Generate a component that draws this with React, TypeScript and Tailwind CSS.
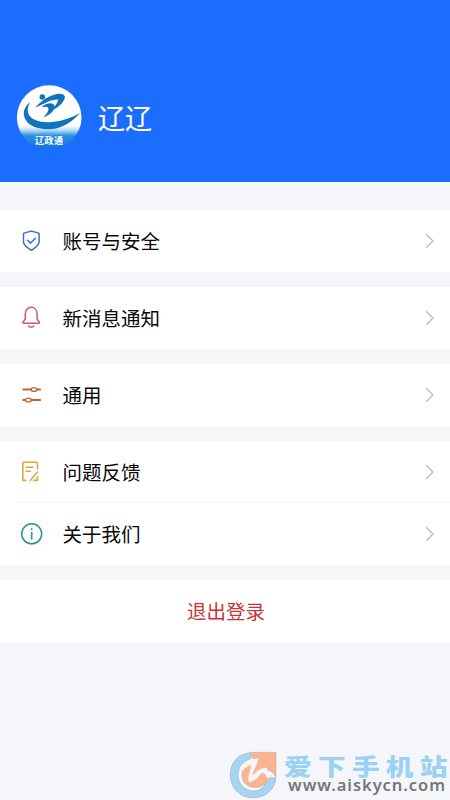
import type { ReactNode } from 'react';

function Avatar() {
  return (
    <svg className="h-[66px] w-[66px]" viewBox="0 0 66 66">
      <defs>
        <linearGradient id="avatarFill" x1="0" y1="0" x2="0" y2="1">
          <stop offset="0.63" stopColor="#fff" />
          <stop offset="0.71" stopColor="#a3d2f3" />
          <stop offset="0.78" stopColor="#2a8fe0" />
          <stop offset="1" stopColor="#1470e0" />
        </linearGradient>
      </defs>
      <circle cx="33.200" cy="32.500" r="32.300" fill="url(#avatarFill)" />
      <g fill="#1273bd">
        <circle cx="26.300" cy="12" r="2.800" />
        <path d="M19.500 22.500 C26 15 33 10.500 41 9 C47 8 50 10.500 48.500 14 C46 19.500 40 24 36 25 C39 21 42 17.500 42 14.500 C34 14.500 28 19 19.500 22.500Z" />
        <path d="M26 22 C30 17.500 38.500 17 38.500 21 C38.500 26 34 30 27.500 32.500 C31 28.500 33.500 25 32 22.500 C30 21 28 22 26 22Z" />
        <path d="M14 17 C8 22 6 29 9.500 34.500 C13 41.500 24 45 36 44 C47 43 56 37 64 28 C55 33 46 36 36 37 C25 38 15 35 12.500 29 C11 25 12 21 14 17Z" />
      </g>
      <text x="33.200" y="58.800" textAnchor="middle" fill="#fff" fontSize="9" fontWeight="700" letterSpacing="0.400" fontFamily="'Noto Sans CJK SC', sans-serif">辽政通</text>
    </svg>
  );
}

function ShieldIcon() {
  return (
    <svg className="size-[24px]" viewBox="0 0 24 24" fill="none" stroke="#3970bd" strokeWidth="1.500" strokeLinecap="round" strokeLinejoin="round">
      <path d="M3.500 4.800 Q3.500 4 4.400 3.900 C7 3.500 9 2.300 11.300 2.300 C13.600 2.300 15.800 3.500 18.200 3.900 Q19.100 4 19.100 4.800 V13 C19.100 16.500 15.500 18.500 11.300 21.300 C7 18.500 3.500 16.500 3.500 13Z" />
      <path d="m7.600 11.200 3 2.900 4.800-4.900" />
    </svg>
  );
}

function BellIcon() {
  return (
    <svg className="size-[24px]" viewBox="0 0 24 24" fill="none" stroke="#cf5960" strokeWidth="1.500" strokeLinecap="round" strokeLinejoin="round">
      <path d="M5.300 13 V8 C5.300 4 7.800 1.300 11.200 1.300 S17.100 4 17.100 8 V13 L19.300 16 Q19.800 17.300 18.600 17.300 H3.800 Q2.600 17.300 3.100 16Z" />
      <path d="M8.700 20 Q11.200 22.400 13.700 20" />
    </svg>
  );
}

function SlidersIcon() {
  return (
    <svg className="size-[24px]" viewBox="0 0 24 24" fill="none" stroke="#bf6533" strokeWidth="1.800" strokeLinecap="round">
      <path d="M3.200 6.500H11M17 6.500h3.200M3.200 17H5M11.500 17h8.700" />
      <ellipse cx="14" cy="6.500" rx="2.900" ry="1.900" strokeWidth="1.300" />
      <ellipse cx="8.400" cy="17" rx="2.900" ry="1.900" strokeWidth="1.300" />
    </svg>
  );
}

function FeedbackIcon() {
  return (
    <svg className="size-[24px]" viewBox="0 0 24 24" fill="none" stroke="#e1a43b" strokeWidth="1.600" strokeLinecap="round" strokeLinejoin="round">
      <path d="M5.500 20.400H3.400Q2.800 20.400 2.800 19.700V3Q2.800 2.200 3.700 2.200H16.500Q17.500 2.200 17.500 3V9" />
      <path d="M6.200 7.200h6.800M6.200 11.200h4M10.300 20.400l7.200-8.300M14 20.400h3.500v-3.600" />
    </svg>
  );
}

function InfoIcon() {
  return (
    <svg className="size-[24px]" viewBox="0 0 24 24" fill="none" stroke="#2d929d" strokeWidth="1.500">
      <circle cx="11.700" cy="11.800" r="10" />
      <path d="M11.700 9.800v7.800" strokeWidth="1.600" />
      <path d="M11.700 6.300v1.700" strokeWidth="1.600" />
    </svg>
  );
}

function Row({ icon, label, divided = false }: { icon: ReactNode; label: string; divided?: boolean }) {
  return (
    <div className="relative flex h-[62px] items-center pl-5 pr-[14px]">
      {icon}
      <span className="ml-[18.500px] flex-1 text-[19.500px] leading-[30px] text-[#080808]">{label}</span>
      <svg className="h-4 w-3" viewBox="0 0 12 16" fill="none" stroke="#bdbdbd" strokeWidth="1.400">
        <path d="m2.200 1.300 6.800 6.700-6.800 6.700" />
      </svg>
      {divided && <div className="absolute right-0 bottom-0 left-4 h-px bg-[#f2f3f5]" />}
    </div>
  );
}

function Watermark() {
  return (
    <div className="absolute right-0 bottom-0 flex h-[52px] w-[222px]">
      <svg className="h-[52px] w-[222px]" viewBox="0 0 222 52">
        <path d="M23.500 4.800 C10 5 2.300 15 2.300 27 C2.300 40 12 49.800 25 49.800 C37 49.800 47 42 47.800 30 L39.500 29.500 C38 38 33 43 26 43 C17 43 10 36 10 27 C10 19 15 13 22.500 11Z" fill="#a4d5f3" stroke="#aaa9b5" strokeWidth="0.600" />
        <path d="M22 4.300H48V29L43 23 C43 33 36 39.500 27 39.500 C19 39.500 14 34 14 27 C14 20 18 15 26 13Z" fill="#fab48f" stroke="#b5a8a5" strokeWidth="0.500" />
        <path d="M22 11.500 L31 10.500 L24 27.500 C27 26.500 29 20.500 38.500 19.500 L40 23 L44 24 L41 31 L38.500 29 C37.500 25 34.500 23.500 32 26.500 C29 31 26 33.500 20.500 34 C19.500 29 22 23 23.500 17 C20 17.500 16.500 20 15 23 L13.500 19Z" fill="#f4f6fa" />
        <text transform="translate(56 26.500) scale(1.230 1)" x="0" y="0" fill="#9bd1f3" fontSize="22.500" fontWeight="900" letterSpacing="5.100" fontFamily="'Noto Sans CJK SC', sans-serif">爱下手机站</text>
        <text x="60" y="43" fill="#777777" fontSize="16.500" fontWeight="600" textLength="157" lengthAdjust="spacing" fontFamily="'Noto Sans', 'Open Sans', sans-serif">www.aiskycn.com</text>
      </svg>
    </div>
  );
}

export default function App() {
  return (
    <main className="relative h-[800px] w-[450px] overflow-hidden bg-[#f4f6fa] font-['Noto_Sans_CJK_SC',sans-serif]">
      <header className="flex h-[182px] items-center bg-[#1a6dff] pt-[54px] pl-4">
        <Avatar />
        <h1 className="ml-4 text-[27px] leading-[40px] font-normal text-white">辽辽</h1>
      </header>
      <div className="flex flex-col gap-[15px] pt-7">
        <section className="bg-white"><Row icon={<ShieldIcon />} label="账号与安全" /></section>
        <section className="bg-white"><Row icon={<BellIcon />} label="新消息通知" /></section>
        <section className="bg-white"><Row icon={<SlidersIcon />} label="通用" /></section>
        <section className="bg-white">
          <Row icon={<FeedbackIcon />} label="问题反馈" divided />
          <Row icon={<InfoIcon />} label="关于我们" />
        </section>
        <button className="flex h-[62px] items-center justify-center bg-white pl-[2px] text-[19.500px] text-[#c83437]">退出登录</button>
      </div>
      <Watermark />
    </main>
  );
}
